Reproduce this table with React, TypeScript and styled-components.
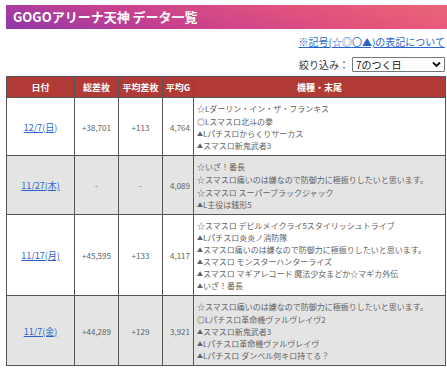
import React from "react";
import styled, { createGlobalStyle } from "styled-components";

type Mark = "☆" | "◎" | "▲";

interface Entry {
  mark: Mark;
  text: string;
}

interface DayRow {
  date: string;
  total: string;
  avg: string;
  games: string;
  entries: Entry[];
}

const e = (mark: Mark, text: string): Entry => ({ mark, text });

const rows: DayRow[] = [
  {
    date: "12/7(日)",
    total: "+38,701",
    avg: "+113",
    games: "4,764",
    entries: [
      e("☆", "Lダーリン・イン・ザ・フランキス"),
      e("◎", "Lスマスロ北斗の拳"),
      e("▲", "Lパチスロからくりサーカス"),
      e("▲", "スマスロ新鬼武者3"),
    ],
  },
  {
    date: "11/27(木)",
    total: "-",
    avg: "-",
    games: "4,089",
    entries: [
      e("☆", "いざ！番長"),
      e("☆", "スマスロ痛いのは嫌なので防御力に極振りしたいと思います。"),
      e("☆", "スマスロ スーパーブラックジャック"),
      e("▲", "L主役は銭形5"),
    ],
  },
  {
    date: "11/17(月)",
    total: "+45,595",
    avg: "+133",
    games: "4,117",
    entries: [
      e("☆", "スマスロ デビルメイクライ5スタイリッシュトライブ"),
      e("▲", "Lパチスロ炎炎ノ消防隊"),
      e("▲", "スマスロ痛いのは嫌なので防御力に極振りしたいと思います。"),
      e("▲", "スマスロ モンスターハンターライズ"),
      e("▲", "スマスロ マギアレコード 魔法少女まどか☆マギカ外伝"),
      e("▲", "いざ！番長"),
    ],
  },
  {
    date: "11/7(金)",
    total: "+44,289",
    avg: "+129",
    games: "3,921",
    entries: [
      e("☆", "スマスロ痛いのは嫌なので防御力に極振りしたいと思います。"),
      e("◎", "Lパチスロ革命機ヴァルヴレイヴ2"),
      e("▲", "スマスロ新鬼武者3"),
      e("▲", "Lパチスロ革命機ヴァルヴレイヴ"),
      e("▲", "Lパチスロ ダンベル何キロ持てる？"),
    ],
  },
];

const GlobalStyle = createGlobalStyle`
  body {
    margin: 0;
    background: #fff;
    font-family: "Noto Sans CJK JP", "Noto Sans", sans-serif;
    overflow: hidden;
  }
`;

const Page = styled.div`
  padding: 5px 0 0 6px;
  width: 441px;
`;

const TitleBar = styled.h1`
  margin: 0;
  height: 24px;
  padding-left: 7px;
  background: linear-gradient(15deg, #8f37aa 0%, #c9418e 35%, #e2537c 70%, #ea6576 100%);
  color: #fff;
  font-size: 13px;
  font-weight: 700;
  line-height: 24px;
  white-space: nowrap;
`;

const Controls = styled.div`
  display: flex;
  flex-direction: column;
  align-items: flex-end;
  padding-right: 2px;
`;

const NoteLink = styled.a`
  margin-top: 6px;
  color: #2a63cc;
  font-size: 10px;
  line-height: 14px;
  text-decoration: underline;
`;

const FilterRow = styled.div`
  display: flex;
  align-items: center;
  gap: 3px;
  margin-top: 8px;
  font-size: 10px;
  color: #333;
`;

const SelectBox = styled.div`
  position: relative;
  width: 93px;
  height: 15px;
`;

const Select = styled.select`
  appearance: none;
  box-sizing: border-box;
  width: 100%;
  height: 100%;
  margin: 0;
  padding: 0 0 0 3px;
  border: 1px solid #777;
  border-radius: 1px;
  background: #fff;
  color: #111;
  font-family: "Noto Sans CJK JP", sans-serif;
  font-size: 10px;
  line-height: 13px;
`;

const Chevron = styled.svg`
  position: absolute;
  right: 4px;
  top: 4px;
  pointer-events: none;
`;

const Table = styled.table`
  margin-top: 4px;
  width: 440px;
  border-collapse: collapse;
  table-layout: fixed;
  border: 1px solid #555;
`;

const HeadCell = styled.th<{ $w?: number }>`
  width: ${(p) => (p.$w ? `${p.$w}px` : "auto")};
  height: 20px;
  padding: 0;
  border: 1px solid #555;
  background: #b23a36;
  color: #fff;
  font-size: 9px;
  font-weight: 700;
  text-align: center;
  white-space: nowrap;
`;

const Row = styled.tr<{ $shade: boolean }>`
  background: ${(p) => (p.$shade ? "#e4e4e4" : "#fff")};
`;

const Cell = styled.td<{ $align?: "center" | "left" | "right" }>`
  padding: 4px 3px 3px;
  border: 1px solid #555;
  color: #626262;
  font-size: 8px;
  text-align: ${(p) => p.$align || "center"};
  vertical-align: middle;
  white-space: nowrap;
`;

const DateLink = styled.a`
  color: #2a63cc;
  font-size: 9px;
  text-decoration: underline;
`;

const Line = styled.div<{ $tall: boolean }>`
  line-height: ${(p) => (p.$tall ? "13px" : "12px")};
  height: ${(p) => (p.$tall ? "13px" : "12px")};
`;

const MarkGlyph = styled.span<{ $small: boolean }>`
  font-size: ${(p) => (p.$small ? "6px" : "8px")};
  vertical-align: ${(p) => (p.$small ? "1px" : "0")};
`;

export default function App() {
  return (
    <Page>
      <GlobalStyle />
      <TitleBar>GOGOアリーナ天神 データ一覧</TitleBar>
      <Controls>
        <NoteLink href="#">※記号(☆◎〇▲)の表記について</NoteLink>
        <FilterRow>
          <span>絞り込み：</span>
          <SelectBox>
            <Select defaultValue="7">
              <option value="7">7のつく日</option>
            </Select>
            <Chevron width="9" height="7" viewBox="0 0 9 7">
              <path d="M1 1.5 L4.5 5 L8 1.5" fill="none" stroke="#111" strokeWidth="1.8" />
            </Chevron>
          </SelectBox>
        </FilterRow>
      </Controls>
      <Table>
        <thead>
          <tr>
            <HeadCell $w={67}>日付</HeadCell>
            <HeadCell $w={43}>総差枚</HeadCell>
            <HeadCell $w={43}>平均差枚</HeadCell>
            <HeadCell $w={30}>平均G</HeadCell>
            <HeadCell>機種・末尾</HeadCell>
          </tr>
        </thead>
        <tbody>
          {rows.map((r, i) => (
            <Row key={r.date} $shade={i % 2 === 1}>
              <Cell>
                <DateLink href="#">{r.date}</DateLink>
              </Cell>
              <Cell>{r.total}</Cell>
              <Cell>{r.avg}</Cell>
              <Cell $align="right">{r.games}</Cell>
              <Cell $align="left">
                {r.entries.map((en, j) => (
                  <Line key={j} $tall={en.mark !== "▲"}>
                    <MarkGlyph $small={en.mark === "▲"}>{en.mark}</MarkGlyph>
                    {en.text}
                  </Line>
                ))}
              </Cell>
            </Row>
          ))}
        </tbody>
      </Table>
    </Page>
  );
}
